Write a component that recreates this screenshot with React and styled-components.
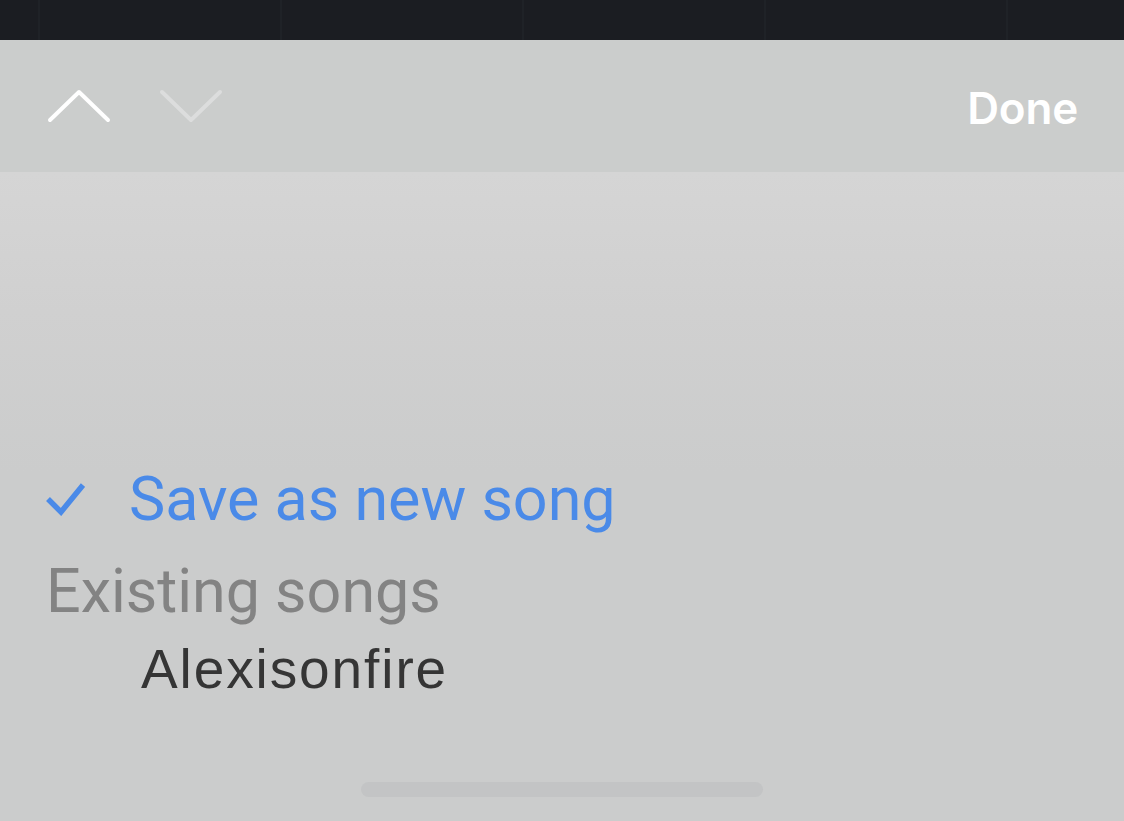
import React from "react";
import styled, { createGlobalStyle } from "styled-components";

const GlobalStyle = createGlobalStyle`
  html, body {
    margin: 0;
    padding: 0;
  }
  body {
    font-family: Roboto, "Noto Sans", sans-serif;
    background: #cbcccc;
  }
`;

const Screen = styled.div`
  width: 1124px;
  height: 821px;
  display: flex;
  flex-direction: column;
  overflow: hidden;
`;

// dark strip of the app peeking out above the sheet
const BackStrip = styled.div`
  height: 40px;
  flex: none;
  background: #1b1d22;
  display: flex;
  padding-left: 38px;
  box-sizing: border-box;
`;

const BackCell = styled.div`
  width: 240px;
  border-left: 2px solid #1f2227;
  flex: none;
`;

const Toolbar = styled.div`
  height: 132px;
  flex: none;
  background: #cbcdcc;
  display: flex;
  align-items: center;
  padding: 0 46px 0 47px;
  box-sizing: border-box;
`;

const NavGroup = styled.div`
  display: flex;
  align-items: center;
  gap: 48px;
  flex: 1;
`;

const NavButton = styled.button`
  border: none;
  background: none;
  padding: 0;
  display: flex;
  color: ${(p) => (p.$disabled ? "#dcdddd" : "#ffffff")};
`;

const DoneButton = styled.button`
  border: none;
  background: none;
  padding: 0;
  margin-top: 4px;
  font-family: Inter, Roboto, sans-serif;
  font-weight: 600;
  font-size: 44px;
  color: #ffffff;
  letter-spacing: -0.2px;
`;

const Picker = styled.div`
  flex: 1;
  display: flex;
  flex-direction: column;
  background: linear-gradient(#d5d5d5 0px, #d0d0d0 140px, #cbcccc 300px);
  padding-top: 291px;
  box-sizing: border-box;
`;

const OptionRow = styled.div`
  display: flex;
  align-items: center;
  height: 72px;
  padding-left: 45px;
`;

const CheckSlot = styled.div`
  width: 84px;
  display: flex;
  align-items: center;
  color: #4a8ae8;
`;

const OptionLabel = styled.span`
  font-size: 61px;
  line-height: 72px;
  color: #4a8ae8;
`;

const SectionLabel = styled.div`
  font-size: 61px;
  line-height: 72px;
  color: #838383;
  margin-top: 20px;
  padding-left: 46px;
`;

const SongItem = styled.div`
  font-family: "Liberation Sans", Arial, sans-serif;
  font-size: 55px;
  line-height: 64px;
  color: #353535;
  margin-top: 10px;
  padding-left: 141px;
  letter-spacing: 1.9px;
`;

const HomeBar = styled.div`
  margin: auto auto 24px;
  width: 402px;
  height: 15px;
  border-radius: 8px;
  background: #c3c4c5;
`;

const Chevron = ({ up }) => (
  <svg width="64" height="36" viewBox="0 0 64 36" fill="none">
    <polyline
      points={up ? "3,32 32,4 61,32" : "3,4 32,32 61,4"}
      stroke="currentColor"
      strokeWidth="4"
      strokeLinecap="round"
      strokeLinejoin="round"
    />
  </svg>
);

const Check = () => (
  <svg width="40" height="34" viewBox="0 0 40 34" fill="none">
    <polyline
      points="3,17 16,30 38,3"
      stroke="currentColor"
      strokeWidth="5.5"
      strokeLinejoin="miter"
    />
  </svg>
);

export default function App() {
  return (
    <>
      <GlobalStyle />
      <Screen>
        <BackStrip>
          {[0, 1, 2, 3, 4].map((i) => (
            <BackCell key={i} />
          ))}
        </BackStrip>
        <Toolbar>
          <NavGroup>
            <NavButton>
              <Chevron up />
            </NavButton>
            <NavButton $disabled>
              <Chevron />
            </NavButton>
          </NavGroup>
          <DoneButton>Done</DoneButton>
        </Toolbar>
        <Picker>
          <OptionRow>
            <CheckSlot>
              <Check />
            </CheckSlot>
            <OptionLabel>Save as new song</OptionLabel>
          </OptionRow>
          <SectionLabel>Existing songs</SectionLabel>
          <SongItem>Alexisonfire</SongItem>
          <HomeBar />
        </Picker>
      </Screen>
    </>
  );
}
